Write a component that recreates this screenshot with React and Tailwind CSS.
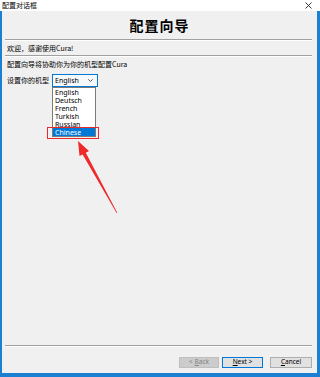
import React from "react";

const cjk = { fontFamily: '"Noto Sans CJK SC", "Noto Sans", sans-serif' };
const ui = { fontFamily: '"Noto Sans", "Noto Sans CJK SC", sans-serif' };

function Line() {
  return <div className="ml-[3px] mr-[5px] h-[2px] border-t border-[#a0a0a0] border-b border-b-white shrink-0" />;
}

export default function App() {
  const items = ["English", "Deutsch", "French", "Turkish", "Russian", "Chinese"];
  return (
    <div className="relative w-[320px] h-[377px] bg-[#1b7fd2] flex flex-col overflow-hidden">
      <div className="h-[11px] bg-white flex items-center justify-between pl-[2px] pr-[8px] shrink-0">
        <span className="text-[7px] leading-none text-black" style={cjk}>配置对话框</span>
        <svg width="7" height="7" viewBox="0 0 7 7">
          <path d="M0.5 0.5 L6.5 6.5 M6.5 0.5 L0.5 6.5" stroke="#222" strokeWidth="0.9" />
        </svg>
      </div>
      <div className="flex-1 ml-[2px] mr-[3px] mb-[4px] bg-[#f0f0f0] flex flex-col">
        <div className="h-[28px] flex items-center justify-center shrink-0">
          <span className="text-[14px] font-bold leading-none text-black tracking-[1px]" style={cjk}>配置向导</span>
        </div>
        <Line />
        <div className="h-[14px] flex items-center pl-[5px] shrink-0">
          <span className="text-[7px] leading-none text-black" style={cjk}>欢迎，感谢使用Cura!</span>
        </div>
        <Line />
        <div className="h-[14px] flex items-center pl-[5px] shrink-0">
          <span className="text-[7px] leading-none text-black" style={cjk}>配置向导将协助你为你的机型配置Cura</span>
        </div>
        <div className="mt-[3px] h-[13px] flex items-center shrink-0">
          <span className="w-[50px] pl-[5px] text-[7px] leading-none text-black" style={cjk}>设置你的机型</span>
          <div className="w-[46px] h-[13px] bg-[#f6f9fc] border border-[#0078d7] flex items-center justify-between pl-[2px] pr-[4px]">
            <span className="text-[7px] leading-none text-black" style={ui}>English</span>
            <svg width="5" height="3" viewBox="0 0 5 3">
              <path d="M0.3 0.3 L2.5 2.5 L4.7 0.3" fill="none" stroke="#333" strokeWidth="0.8" />
            </svg>
          </div>
        </div>
        <div className="flex-1" />
        <Line />
        <div className="mt-[10px] mb-[5px] h-[11px] flex justify-end pr-[5px] shrink-0" style={ui}>
          <div className="w-[40px] h-[11px] bg-[#cccccc] border border-[#bfbfbf] flex items-center justify-center text-[6.5px] leading-none text-[#838383]">
            &lt; <span className="underline ml-[2px]">B</span>ack
          </div>
          <div className="ml-[3px] w-[41px] h-[11px] bg-[#e1e1e1] border border-[#0078d7] flex items-center justify-center text-[6.5px] leading-none text-black">
            <span className="underline">N</span>ext &gt;
          </div>
          <div className="ml-[7px] w-[42px] h-[11px] bg-[#e1e1e1] border border-[#adadad] flex items-center justify-center text-[6.5px] leading-none text-black">
            <span className="underline">C</span>ancel
          </div>
        </div>
      </div>

      {/* dropdown list */}
      <div className="absolute left-[52px] top-[87px] w-[44px] bg-white border border-[#7a7a7a] flex flex-col" style={ui}>
        {items.map((it) => (
          <div
            key={it}
            className={
              it === "Chinese"
                ? "h-[8px] flex items-center pl-[2px] text-[7px] leading-none bg-[#0078d7] text-white"
                : "h-[8px] flex items-center pl-[2px] text-[7px] leading-none text-black"
            }
          >
            {it}
          </div>
        ))}
      </div>
      {/* red highlight box */}
      <div className="absolute left-[47px] top-[127px] w-[52px] h-[12px] border-[1.5px] border-[#e8292b]" />
      {/* arrow */}
      <svg className="absolute left-0 top-0" width="320" height="377" viewBox="0 0 320 377">
        <polygon
          points="78,141 89,151 85.8,152.8 117.4,213 116.6,213 82.6,154.4 79.5,156"
          fill="#ee2a2a"
        />
      </svg>
    </div>
  );
}
